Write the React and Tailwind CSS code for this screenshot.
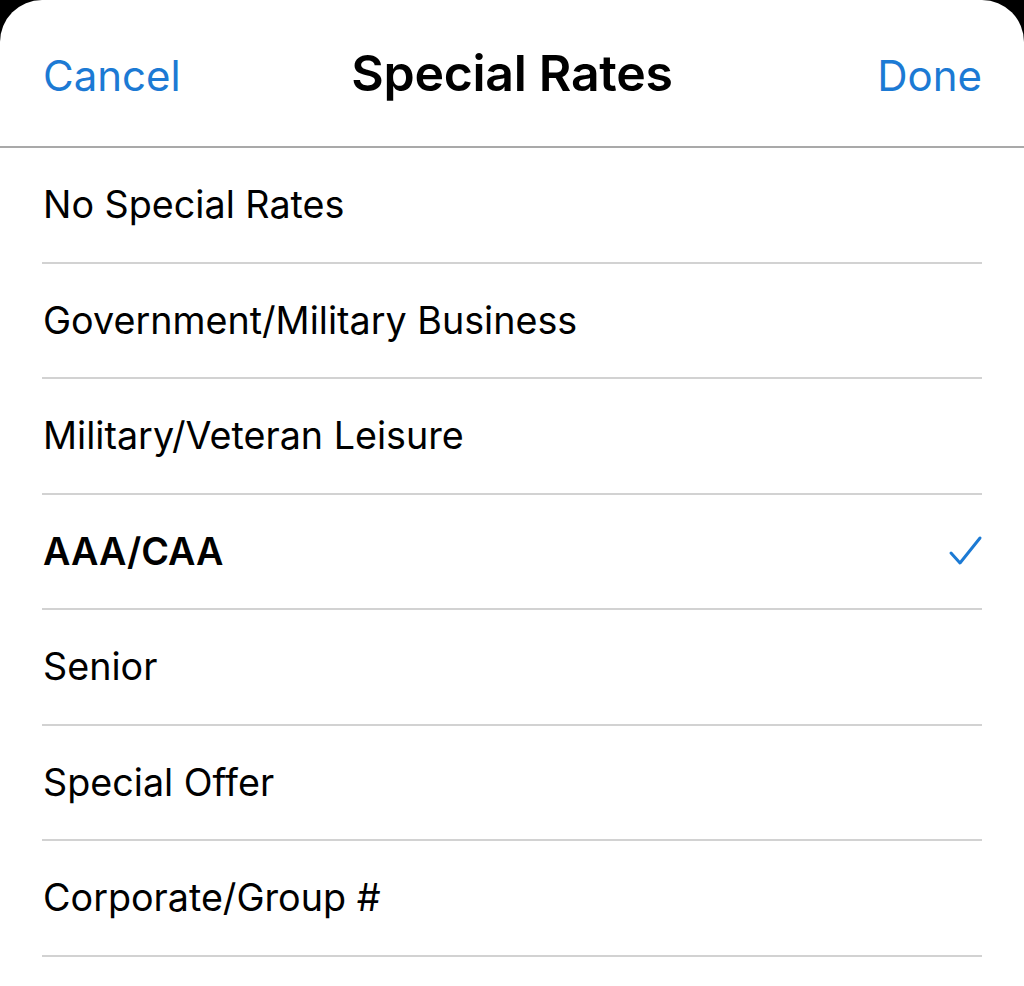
const rates = [
  { label: "No Special Rates" },
  { label: "Government/Military Business" },
  { label: "Military/Veteran Leisure" },
  { label: "AAA/CAA", selected: true },
  { label: "Senior" },
  { label: "Special Offer" },
  { label: "Corporate/Group #" },
];

function Checkmark() {
  return (
    <svg width="36" height="34" viewBox="0 0 36 34" fill="none" className="mr-[-1px]">
      <path d="M4 19 L13 29 L33 4" stroke="#1c7ad4" strokeWidth="3" strokeLinecap="round" strokeLinejoin="round" />
    </svg>
  );
}

export default function App() {
  return (
    <div className="w-[1024px] h-[986px] bg-black overflow-hidden" style={{ fontFamily: "Inter, 'Liberation Sans', sans-serif" }}>
      <div className="h-full bg-white rounded-t-[42px]">
        {/* Nav bar */}
        <div className="h-[148px] flex items-center justify-between px-[43px] border-b-2 border-[#a9a9a9] relative">
          <button className="text-[42px] text-[#1c7ad4] pt-1">Cancel</button>
          <h1 className="absolute left-0 right-0 text-center text-[50px] font-semibold text-black tracking-[-0.3px] pointer-events-none">
            Special Rates
          </h1>
          <button className="text-[42px] text-[#1c7ad4] pt-1 mr-[-1px]">Done</button>
        </div>

        {/* Options */}
        <ul className="mx-[42px]">
          {rates.map((r) => (
            <li
              key={r.label}
              className="h-[115.5px] flex items-center justify-between border-b-2 border-[#d2d2d2]"
            >
              <span className={`text-[37.7px] text-black pl-[1px] ${r.selected ? "font-semibold" : ""}`}>
                {r.label}
              </span>
              {r.selected && <Checkmark />}
            </li>
          ))}
        </ul>
      </div>
    </div>
  );
}
